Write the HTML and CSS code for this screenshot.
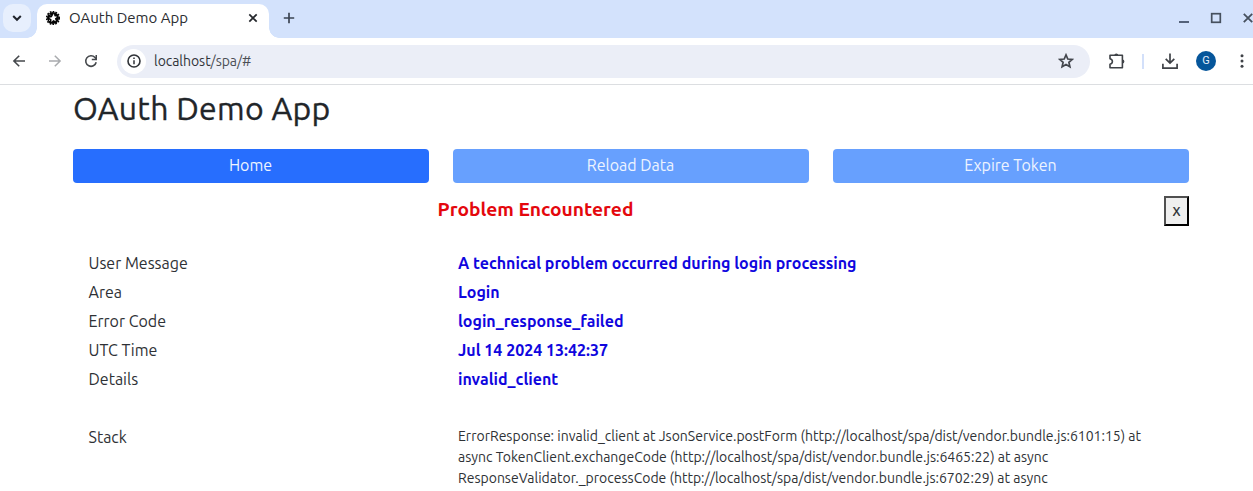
FILE: index.html
```html
<!DOCTYPE html>
<html lang="en">
<head>
<meta charset="utf-8">
<title>OAuth Demo App</title>
<link rel="stylesheet" href="styles.css">
</head>
<body>
<header class="browser">
  <div class="tabstrip">
    <button class="tab-search" aria-label="Search tabs"><svg width="10" height="8" viewBox="0 0 10 8"><path d="M1.2 2 5 5.8 8.8 2" fill="none" stroke="#20242c" stroke-width="2"/></svg></button>
    <div class="tab">
      <svg class="favicon" width="14" height="14" viewBox="0 0 14 14"><circle cx="7" cy="7" r="6" fill="#050505"/><circle cx="7" cy="7" r="6.4" fill="none" stroke="#050505" stroke-width="1.5" stroke-dasharray="1.7 1.2"/><path d="m7.9 2.6.5 2.7 2.7.4-2.2 1.8 1 2.7-2.6-1.1-1.9 2 .1-2.8-2.5-1.5 2.8-.5z" fill="#fff"/><path d="m3.6 3.4.9.9M3 9.7l1-.7" stroke="#fff" stroke-width=".8"/></svg>
      <span class="tab-title">OAuth Demo App</span>
      <svg class="tab-close" width="10" height="10" viewBox="0 0 10 10"><path d="m1.3 1.3 7.4 7.4m0-7.4L1.3 8.7" stroke="#25282d" stroke-width="1.7"/></svg>
    </div>
    <svg class="new-tab" width="12" height="12" viewBox="0 0 12 12"><path d="M6 .8v10.4M.8 6h10.4" stroke="#3b4452" stroke-width="1.7"/></svg>
    <div class="window-controls">
      <svg width="12" height="12" viewBox="0 0 12 12"><path d="M1 10h10" stroke="#46546b" stroke-width="1.8"/></svg>
      <svg width="12" height="12" viewBox="0 0 12 12"><rect x="1.7" y="1.7" width="8.6" height="8.6" fill="none" stroke="#46505e" stroke-width="1.7"/></svg>
      <svg width="12" height="12" viewBox="0 0 12 12"><path d="m1.8 1.8 8.4 8.4m0-8.4-8.4 8.4" stroke="#46505e" stroke-width="1.8"/></svg>
    </div>
  </div>
  <div class="toolbar">
    <svg class="nav back" width="14" height="14" viewBox="0 0 14 14"><path d="M13 7H2m5.2-5.3L1.9 7l5.3 5.3" fill="none" stroke="#45484c" stroke-width="1.6"/></svg>
    <svg class="nav forward" width="14" height="14" viewBox="0 0 14 14"><path d="M1 7h11M6.8 1.7 12.1 7l-5.3 5.3" fill="none" stroke="#a9abae" stroke-width="1.5"/></svg>
    <svg class="nav reload" width="14" height="14" viewBox="0 0 14 14"><path d="M12.2 8.3A5.3 5.3 0 1 1 11 3.5L12.3 5" fill="none" stroke="#45484c" stroke-width="1.6"/><path d="M13 1v5.2H7.8V4.7h3.7V1z" fill="#45484c"/></svg>
    <div class="omnibox">
      <span class="site-info"><svg width="14" height="14" viewBox="0 0 14 14"><circle cx="7" cy="7" r="6" fill="none" stroke="#303338" stroke-width="1.6"/><path d="M7 6.2v4.1M7 3.6v1.5" stroke="#303338" stroke-width="1.5"/></svg></span>
      <span class="url">localhost<span class="url-path">/spa/#</span></span>
      <svg class="star" width="16" height="16" viewBox="0 0 16 16"><path d="m8 1.9 1.8 4.1 4.4.4-3.3 2.9 1 4.4L8 11.4l-3.9 2.3 1-4.4-3.3-2.9 4.4-.4z" fill="none" stroke="#43464d" stroke-width="1.7"/></svg>
    </div>
    <svg class="puzzle" width="18" height="18" viewBox="0 0 18 18"><path d="M2 3.3h12.4v12.4H2v-3.4q2.4-.5 2.4-2.8T2 6.7z" fill="none" stroke="#3f4247" stroke-width="1.6" stroke-linejoin="round"/><path d="M6.3 3.4a2 2 0 0 1 4 0zM14.4 7.5a2 2 0 0 1 0 4z" fill="#3f4247"/></svg>
    <span class="divider"></span>
    <svg class="download" width="16" height="16" viewBox="0 0 16 16"><path d="M8 .4v9.4M3.7 5.8 8 10.1l4.3-4.3M.9 10.8v4.3h14.2v-4.3" fill="none" stroke="#3f4247" stroke-width="1.7"/></svg>
    <span class="avatar">G</span>
    <svg class="menu" width="4" height="14" viewBox="0 0 4 14"><g fill="#3f4247"><circle cx="2" cy="1.7" r="1.5"/><circle cx="2" cy="7" r="1.5"/><circle cx="2" cy="12.3" r="1.5"/></g></svg>
  </div>
</header>
<main class="app">
  <h1>OAuth Demo App</h1>
  <nav class="actions">
    <button class="action">Home</button>
    <button class="action disabled">Reload Data</button>
    <button class="action disabled">Expire Token</button>
  </nav>
  <div class="error-head">
    <h2>Problem Encountered</h2>
    <button class="dismiss">x</button>
  </div>
  <dl class="details">
    <dt>User Message</dt><dd>A technical problem occurred during login processing</dd>
    <dt>Area</dt><dd>Login</dd>
    <dt>Error Code</dt><dd>login_response_failed</dd>
    <dt>UTC Time</dt><dd>Jul 14 2024 13:42:37</dd>
    <dt>Details</dt><dd>invalid_client</dd>
  </dl>
  <dl class="details stack">
    <dt>Stack</dt>
    <dd class="trace">ErrorResponse: invalid_client at JsonService.postForm (http://localhost/spa/dist/vendor.bundle.js:6101:15) at<br>async TokenClient.exchangeCode (http://localhost/spa/dist/vendor.bundle.js:6465:22) at async<br>ResponseValidator._processCode (http://localhost/spa/dist/vendor.bundle.js:6702:29) at async</dd>
  </dl>
</main>
</body>
</html>
```
FILE: styles.css
```css
* { box-sizing: border-box; }
body {
  margin: 0;
  height: 491px;
  overflow: hidden;
  background: #fff;
  color: #212529;
  font-family: Ubuntu, "Noto Sans", sans-serif;
  font-size: 16px;
}
svg { display: block; flex: none; }
button { font-family: inherit; padding: 0; border: 0; }

.browser { height: 85px; border-bottom: 1px solid #dcdee1; }
.tabstrip { display: flex; align-items: center; height: 38px; background: #d3e2fc; }
.tab-search {
  display: flex; align-items: center; justify-content: center;
  width: 28px; height: 28px; margin: -2px 0 0 3px;
  border-radius: 10px; background: #e7effd;
}
.tab {
  position: relative;
  display: flex; align-items: center; align-self: flex-end;
  width: 232px; height: 34px; margin-left: 6px; padding: 0 11px 6px 9px;
  border-radius: 10px 10px 0 0; background: #fff;
}
.tab::before, .tab::after {
  content: ""; position: absolute; bottom: 0; width: 10px; height: 10px;
}
.tab::before { left: -10px; background: radial-gradient(circle at 0 0, transparent 9.5px, #fff 10px); }
.tab::after { right: -10px; background: radial-gradient(circle at 100% 0, transparent 9.5px, #fff 10px); }
.tab-title { margin-left: 9px; font-size: 15px; line-height: 20px; color: #2b2d31; white-space: nowrap; }
.tab-close { margin-left: auto; }
.new-tab { margin: -2px 0 0 14px; }
.window-controls { display: flex; gap: 20px; margin: -2px -1px 0 auto; }

.toolbar { display: flex; align-items: center; height: 46px; padding-left: 12px; }
.forward { margin-left: 22px; }
.reload { margin-left: 22px; }
.omnibox {
  display: flex; align-items: center;
  width: 973px; height: 33px; margin-left: 19px; padding: 0 16px 0 4px;
  border-radius: 17px; background: #ebeef7;
}
.site-info {
  display: flex; align-items: center; justify-content: center;
  width: 25px; height: 25px; border-radius: 50%; background: #fff;
}
.url { margin-left: 8px; font-size: 14px; line-height: 20px; letter-spacing: -.04px; color: #303339; }
.url-path { color: #4b4e55; }
.star { margin-left: auto; }
.puzzle { margin: -1px 0 0 18px; }
.divider { width: 2px; height: 15px; margin-left: 16px; background: #d3e0fa; }
.download { margin-left: 18px; }
.avatar {
  width: 20px; height: 20px; margin-left: 18px; border-radius: 50%;
  background: #06569b; color: #e3eefa;
  font: 11px/20px Roboto, sans-serif; text-align: center;
}
.menu { margin-left: 24px; }

.app { width: 1116px; margin-left: 73px; }
h1 {
  margin: 0; padding-top: 3px;
  font-size: 32px; line-height: 40px; font-weight: 450; letter-spacing: .25px;
  -webkit-text-stroke: .35px currentColor;
}
.actions { display: grid; grid-template-columns: repeat(3, 1fr); gap: 24px; margin-top: 21px; }
.action {
  height: 34px; padding: 0 1px 2px 0; border-radius: 4px; background: #276efe;
  color: #eef4ff; font-size: 16px; line-height: 32px;
}
.action.disabled { background: #67a0fe; }
.error-head { display: flex; align-items: center; height: 30px; margin-top: 13px; padding-left: 364.5px; }
h2 { margin: -5px 0 0; font-size: 19.2px; line-height: 24px; font-weight: 600; color: #e4070d; }
.dismiss {
  width: 25px; height: 30px; margin-left: auto; padding-bottom: 2px;
  border: 2px solid; border-color: #505050 #000 #000 #505050;
  background: #efefef; color: #24282c; font-size: 16px; line-height: 24px;
  -webkit-text-stroke: .2px currentColor;
}
.details {
  display: grid; grid-template-columns: 369.5px 1fr; grid-auto-rows: 29px;
  margin: 23px 0 0; padding-left: 15.5px; line-height: 29px;
}
dt { color: #2e3135; }
dd { margin: 0; color: #1006de; font-weight: 600; }
.stack { margin-top: 29px; }
.trace { padding-top: 3px; font-size: 14px; line-height: 21px; font-weight: 400; color: #2e3135; }
```
